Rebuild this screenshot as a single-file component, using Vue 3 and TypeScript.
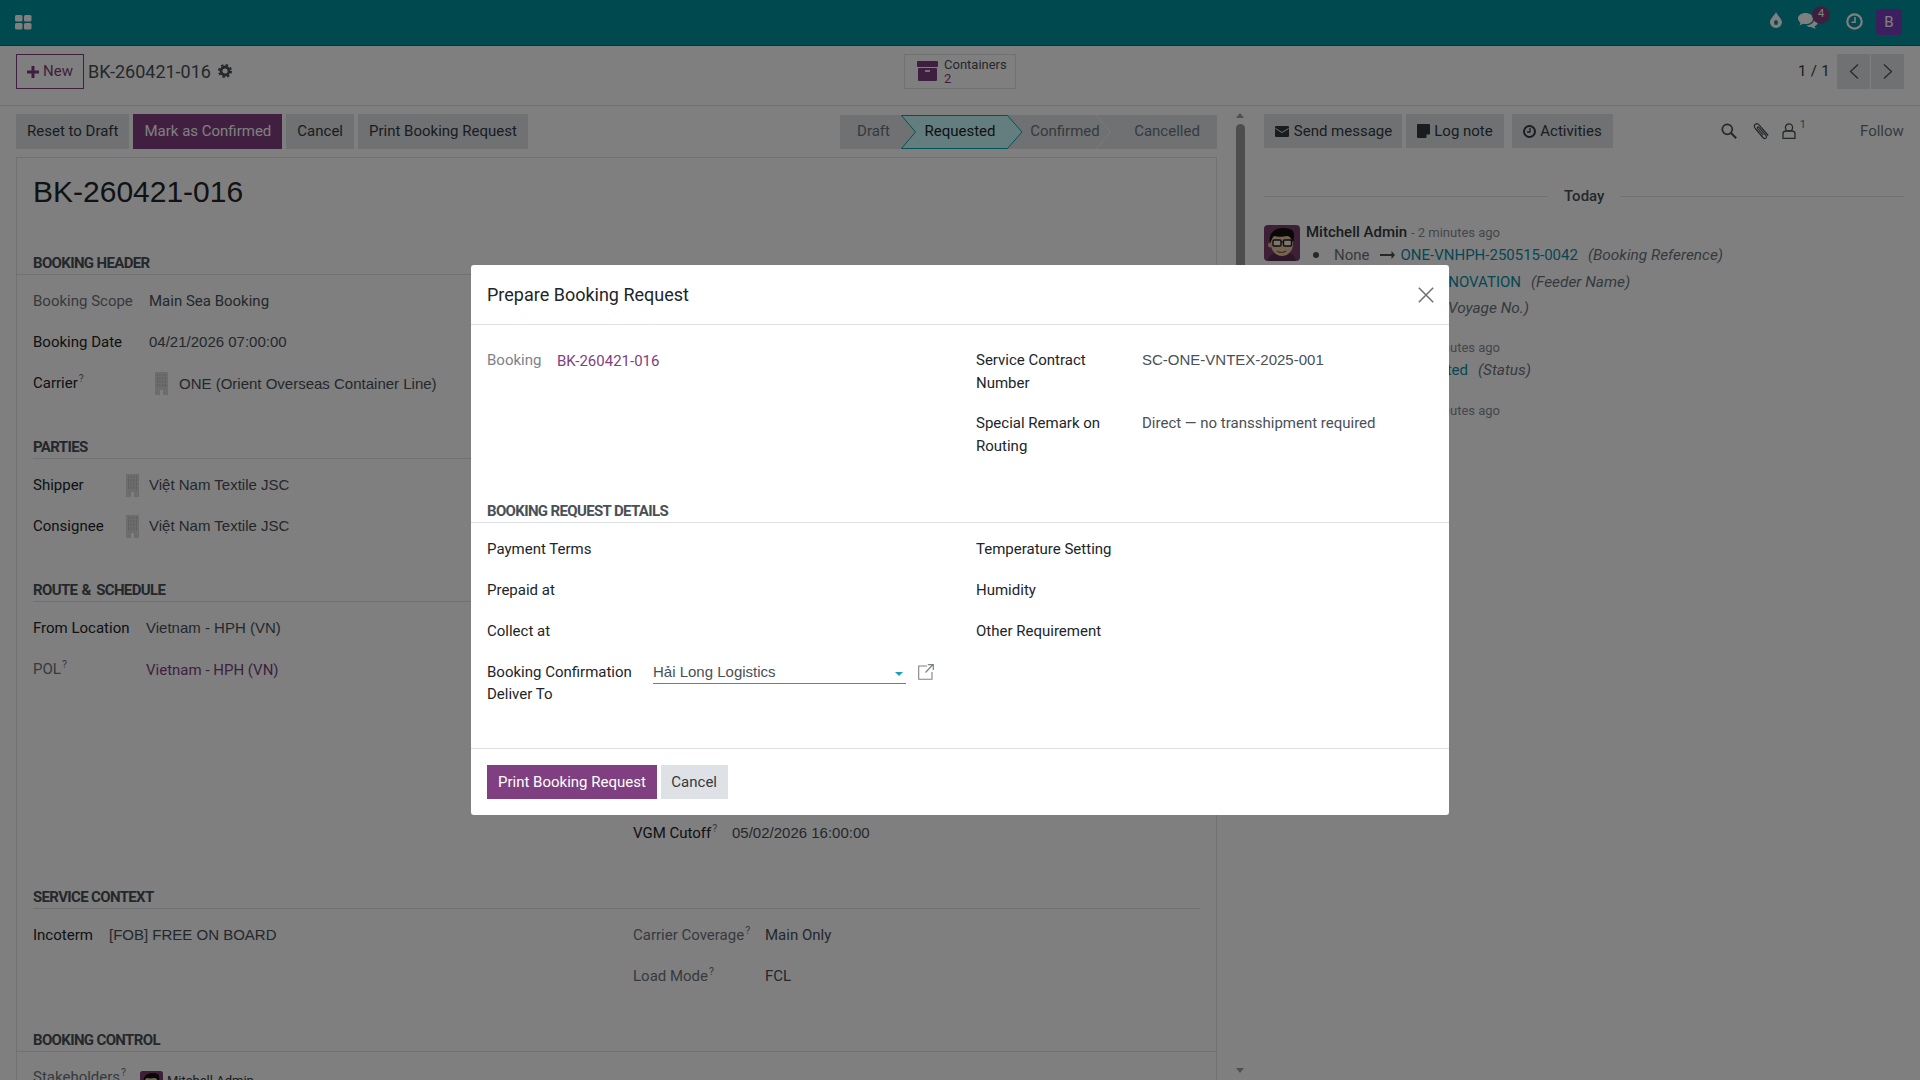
<script setup lang="ts">
const statuses: string[] = ['Draft', 'Requested', 'Confirmed', 'Cancelled']
const detailsLeft: string[] = ['Payment Terms', 'Prepaid at', 'Collect at']
const detailsRight: string[] = ['Temperature Setting', 'Humidity', 'Other Requirement']
</script>

<template>
  <div class="app">
    <svg class="defs" width="0" height="0">
      <defs>
        <symbol id="avatar" viewBox="0 0 36 36">
          <rect width="36" height="36" rx="4" fill="#7a3f6c" />
          <path d="M4 36c1-7 7-9 14-9s13 2 14 9z" fill="#5a2c52" />
          <ellipse cx="18" cy="19" rx="11" ry="12" fill="#ecc9a6" />
          <circle cx="6.500" cy="20" r="2.500" fill="#dcb48f" />
          <path d="M6 18C4 9 10 3 19 3c4 0 9 1 10 3 2 4 1 8 0 11-2-3-3-6-6-6-4 1-10 1-13 0-2 2-3 4-4 7z" fill="#14100f" />
          <rect x="9" y="15" width="8" height="6" rx="1" fill="#f4ece2" stroke="#1d1d1d" stroke-width="1.400" />
          <rect x="19.500" y="15" width="8" height="6" rx="1" fill="#f4ece2" stroke="#1d1d1d" stroke-width="1.400" />
          <path d="M17 17h2.500" stroke="#1d1d1d" stroke-width="1.200" />
          <path d="M13 26c3 2 6 2 9 0" stroke="#8a5a3c" stroke-width="1.200" fill="none" />
        </symbol>
        <symbol id="building" viewBox="0 0 13 23">
          <path d="M0 0h13v23H8v-5H5v5H0z" fill="#dadada" />
          <path d="M2.500 2v13M5 2v13M8 2v13M10.500 2v13" stroke="#bdbdbd" stroke-width="1" />
          <path d="M1 4.500h11M1 8h11M1 11.500h11" stroke="#dadada" stroke-width="1.200" />
        </symbol>
      </defs>
    </svg>

    <header class="topbar">
      <svg class="apps" width="17" height="15" viewBox="0 0 17 15">
        <rect x="0" y="0" width="7.500" height="6.500" rx="1.500" />
        <rect x="9" y="0" width="7.500" height="6.500" rx="1.500" />
        <rect x="0" y="8" width="7.500" height="6.500" rx="1.500" />
        <rect x="9" y="8" width="7.500" height="6.500" rx="1.500" />
      </svg>
      <div class="systray">
        <svg class="tray-drop" width="12" height="16" viewBox="0 0 12 16">
          <path d="M6 0c1 3 6 6.500 6 10.200A6 5.800 0 0 1 0 10.200C0 6.500 5 3 6 0z" fill="#fff" />
          <ellipse cx="6" cy="10.500" rx="2" ry="2.500" fill="#00949f" />
        </svg>
        <div class="tray-chat">
          <svg width="20" height="16" viewBox="0 0 20 16">
            <path d="M7.500 0C3.300 0 0 2.400 0 5.500c0 1.700 1 3.200 2.500 4.200L1.500 12.500l3.400-1.700c.8.200 1.700.3 2.600.3 4.200 0 7.500-2.500 7.500-5.600S11.700 0 7.500 0z" fill="#fff" />
            <path d="M16.500 5.500c.1 3.700-3.600 6.700-8 7 1.200 1 2.800 1.500 4.500 1.500l4.500 2-1-2.800c2-.9 3.500-2.200 3.500-4 0-2-1.500-3.200-3.500-3.700z" fill="#fff" />
          </svg>
          <span class="tray-badge">4</span>
        </div>
        <svg class="tray-clock" width="17" height="17" viewBox="0 0 17 17">
          <circle cx="8.500" cy="8.500" r="7.200" fill="none" stroke="#fff" stroke-width="2.200" />
          <path d="M9 4v5.200H5.500" fill="none" stroke="#fff" stroke-width="1.600" />
        </svg>
        <span class="tray-user">B</span>
      </div>
    </header>

    <div class="control">
      <div class="control-left">
        <button class="btn-new">
          <svg width="12" height="12" viewBox="0 0 12 12"><path d="M4.500 0h3v4.500H12v3H7.500V12h-3V7.500H0v-3h4.500z" fill="#7f3f80" /></svg>
          New
        </button>
        <span class="crumb">BK-260421-016</span>
        <svg class="gear" width="14" height="14" viewBox="0 0 14 14">
          <circle cx="7" cy="7" r="4" fill="none" stroke="#495057" stroke-width="2.800" />
          <circle cx="7" cy="7" r="6" fill="none" stroke="#495057" stroke-width="2" stroke-dasharray="2.400 2.312" />
        </svg>
      </div>
      <div class="stat">
        <svg width="21" height="20" viewBox="0 0 21 20">
          <rect x="0" y="0" width="21" height="6" rx="1" fill="#7f3f80" />
          <rect x="1" y="7" width="19" height="13" rx="1" fill="#7f3f80" />
          <rect x="8" y="9" width="5" height="2" fill="#e8e0e8" />
        </svg>
        <div class="stat-text">
          <span>Containers</span>
          <span class="stat-num">2</span>
        </div>
      </div>
      <div class="control-right">
        <span class="pager">1 / 1</span>
        <button class="page-btn">
          <svg width="10" height="15" viewBox="0 0 10 15"><path d="M9 .5 1.500 7.500 9 14.500" fill="none" stroke="#495057" stroke-width="1.200" /></svg>
        </button>
        <button class="page-btn">
          <svg width="10" height="15" viewBox="0 0 10 15"><path d="M1 .5 8.500 7.500 1 14.500" fill="none" stroke="#495057" stroke-width="1.200" /></svg>
        </button>
      </div>
    </div>

    <div class="main">
      <section class="form-col">
        <div class="actions">
          <div class="action-btns">
            <button class="btn">Reset to Draft</button>
            <button class="btn btn-primary">Mark as Confirmed</button>
            <button class="btn">Cancel</button>
            <button class="btn">Print Booking Request</button>
          </div>
          <div class="statusbar">
            <div v-for="s in statuses" :key="s" class="status" :class="'st-' + s.toLowerCase()">
              <svg v-if="s === 'Requested'" class="st-shape" width="122" height="34" viewBox="0 0 122 34">
                <path d="M.5.500h106L121 17l-14.500 16.500H.5L14.500 17z" fill="#c9fbff" stroke="#00a5b2" />
              </svg>
              <svg v-if="s === 'Confirmed'" class="st-sep" width="15" height="34" viewBox="0 0 15 34">
                <path d="M0 0 14.500 17 0 34" fill="none" stroke="#f4f5f6" />
              </svg>
              <span>{{ s }}</span>
            </div>
          </div>
        </div>

        <div class="sheet">
          <h1 class="title">BK-260421-016</h1>

          <div class="sec sec-wide sec-first">BOOKING HEADER</div>
          <div class="fields">
            <div class="row"><span class="lbl lbl-muted w116">Booking Scope</span><span class="val">Main Sea Booking</span></div>
            <div class="row"><span class="lbl w116">Booking Date</span><span class="val val-a">04/21/2026 07:00:00</span></div>
            <div class="row">
              <span class="lbl w122">Carrier<sup>?</sup></span>
              <svg class="bld bld-wide" width="13" height="23"><use href="#building" /></svg>
              <span class="val val-a val-down">ONE (Orient Overseas Container Line)</span>
            </div>
          </div>

          <div class="sec">PARTIES</div>
          <div class="fields">
            <div class="row">
              <span class="lbl w93">Shipper</span>
              <svg class="bld" width="13" height="23"><use href="#building" /></svg>
              <span class="val val-a">Việt Nam Textile JSC</span>
            </div>
            <div class="row">
              <span class="lbl w93">Consignee</span>
              <svg class="bld" width="13" height="23"><use href="#building" /></svg>
              <span class="val val-a">Việt Nam Textile JSC</span>
            </div>
          </div>

          <div class="sec">ROUTE<span class="amp"> &amp; </span>SCHEDULE</div>
          <div class="two-col">
            <div class="fields">
              <div class="row"><span class="lbl w113">From Location</span><span class="val val-a">Vietnam - HPH (VN)</span></div>
              <div class="row"><span class="lbl lbl-muted w113">POL<sup>?</sup></span><span class="val val-link val-down">Vietnam - HPH (VN)</span></div>
            </div>
            <div class="fields col-right route-right">
              <div class="row"><span class="lbl w99">VGM Cutoff<sup>?</sup></span><span class="val val-a">05/02/2026 16:00:00</span></div>
            </div>
          </div>

          <div class="sec sec-service">SERVICE CONTEXT</div>
          <div class="two-col">
            <div class="fields">
              <div class="row"><span class="lbl w76">Incoterm</span><span class="val val-a">[FOB] FREE ON BOARD</span></div>
            </div>
            <div class="fields col-right">
              <div class="row"><span class="lbl lbl-muted w132">Carrier Coverage<sup>?</sup></span><span class="val">Main Only</span></div>
              <div class="row"><span class="lbl lbl-muted w132">Load Mode<sup>?</sup></span><span class="val">FCL</span></div>
            </div>
          </div>

          <div class="sec sec-wide sec-control">BOOKING CONTROL</div>
          <div class="stake">
            <span class="lbl lbl-muted w108">Stakeholders<sup>?</sup></span>
            <svg class="stake-av" width="23" height="23"><use href="#avatar" /></svg>
            <span class="stake-name">Mitchell Admin</span>
          </div>
        </div>
      </section>

      <div class="scroll">
        <i class="arrow-up"></i>
        <div class="thumb"></div>
        <i class="arrow-down"></i>
      </div>

      <aside class="chatter">
        <div class="chat-top">
          <button class="btn btn-chat w138">
            <svg width="14" height="11" viewBox="0 0 14 11"><rect width="14" height="11" rx="1.200" fill="#343a40" /><path d="M.5 2.500 7 6.500 13.500 2.500" fill="none" stroke="#dee2e6" stroke-width="1" /></svg>
            Send message
          </button>
          <button class="btn btn-chat w98">
            <svg width="13" height="14" viewBox="0 0 13 14"><path d="M1 0h11a1 1 0 0 1 1 1v9l-4 4H1a1 1 0 0 1-1-1V1a1 1 0 0 1 1-1z" fill="#343a40" /><path d="M9.500 14v-3.500H13" fill="#dee2e6" /></svg>
            Log note
          </button>
          <button class="btn btn-chat w100">
            <svg width="13" height="13" viewBox="0 0 13 13"><circle cx="6.500" cy="6.500" r="5.500" fill="none" stroke="#343a40" stroke-width="2" /><path d="M7 3v4H4" fill="none" stroke="#343a40" stroke-width="1.300" /></svg>
            Activities
          </button>
          <div class="chat-tools">
            <svg width="16" height="16" viewBox="0 0 16 16"><circle cx="6.300" cy="6.300" r="5" fill="none" stroke="#495057" stroke-width="1.700" /><path d="m10 10 5.200 5.200" stroke="#495057" stroke-width="2.100" /></svg>
            <svg class="clip" width="17" height="18" viewBox="0 0 17 18"><path d="M15.200 13.500 6.500 3.300C5.300 1.800 3.600 1.300 2.300 2.300 1 3.400 1.100 5 2.300 6.500l7.600 9c.9 1 2 1.300 2.900.6.900-.8.800-1.900-.1-3L6 5.300c-.4-.5-1-.6-1.400-.2-.4.400-.4.900 0 1.400l5.600 6.700" fill="none" stroke="#495057" stroke-width="1.200" /></svg>
            <span class="follower">
              <svg width="14" height="16" viewBox="0 0 14 16"><circle cx="7" cy="4.500" r="3.600" fill="none" stroke="#495057" stroke-width="1.300" /><path d="M1 15.300V11c0-1.800 1.400-3 3-3h6c1.600 0 3 1.200 3 3v4.300z" fill="none" stroke="#495057" stroke-width="1.300" /></svg>
              <span class="follower-n">1</span>
            </span>
            <span class="follow">Follow</span>
          </div>
        </div>

        <div class="today"><span>Today</span></div>

        <div class="msg">
          <svg class="msg-av" width="36" height="36"><use href="#avatar" /></svg>
          <div class="msg-body">
            <div class="msg-head"><b>Mitchell Admin</b> <em>- 2 minutes ago</em></div>
            <div class="msg-row msg-row-first">
              <span class="dot"></span>
              <span class="old">None</span>
              <svg class="long-arrow" width="15" height="8" viewBox="0 0 15 8"><path d="M0 3.100h11.500V0L15 4l-3.500 4V4.900H0z" fill="#495057" /></svg>
              <span class="newval">ONE-VNHPH-250515-0042</span>
              <i class="field-name">(Booking Reference)</i>
            </div>
          </div>
        </div>
        <div class="slot-row slot-feeder"><span class="slot s215"><span class="newval">INNOVATION</span></span><i class="field-name">(Feeder Name)</i></div>
        <div class="slot-row slot-voyage"><span class="slot s223"><i class="field-name">(Voyage No.)</i></span></div>

        <div class="msg msg-next">
          <div class="msg-spacer"></div>
          <div class="msg-body">
            <div class="msg-head"><b>Mitchell Admin</b> <em>- 2 minutes ago</em></div>
          </div>
        </div>
        <div class="slot-row"><span class="slot s162"><span class="newval">Requested</span></span><i class="field-name">(Status)</i></div>

        <div class="msg msg-last">
          <div class="msg-spacer"></div>
          <div class="msg-body">
            <div class="msg-head"><b>Mitchell Admin</b> <em>- 2 minutes ago</em></div>
          </div>
        </div>
      </aside>
    </div>

    <div class="backdrop">
      <div class="modal">
        <div class="modal-head">
          <h4>Prepare Booking Request</h4>
          <svg class="close" width="16" height="16" viewBox="0 0 16 16"><path d="m.8.800 14.400 14.400M15.200.800.800 15.200" stroke="#6f6f6f" stroke-width="1.500" fill="none" /></svg>
        </div>
        <div class="modal-body">
          <div class="m-top">
            <div class="m-col">
              <div class="m-line"><span class="m-lbl-muted w70">Booking</span><span class="m-link">BK-260421-016</span></div>
            </div>
            <div class="m-col m-col-right">
              <div class="m-line"><span class="m-lbl w166">Service Contract Number</span><span class="m-val val-a">SC-ONE-VNTEX-2025-001</span></div>
              <div class="m-line"><span class="m-lbl w166">Special Remark on Routing</span><span class="m-val">Direct — no transshipment required</span></div>
            </div>
          </div>

          <div class="m-sec">BOOKING REQUEST DETAILS</div>

          <div class="m-grid">
            <div class="m-col">
              <div v-for="l in detailsLeft" :key="l" class="m-row"><span class="m-lbl w166">{{ l }}</span></div>
              <div class="m-row">
                <span class="m-lbl w166 deliver">Booking Confirmation Deliver To</span>
                <div class="m-input">
                  <span class="val-a">Hải Long Logistics</span>
                  <i class="caret"></i>
                </div>
                <svg class="ext" width="16" height="16" viewBox="0 0 16 16">
                  <path d="M9 2H.7v13.300H14V8" fill="none" stroke="#7b8289" stroke-width="1.100" />
                  <path d="M7.500 8.500 14.500 1M9.800.7h5.500v5.300" fill="none" stroke="#7b8289" stroke-width="1.200" />
                </svg>
              </div>
            </div>
            <div class="m-col m-col-right">
              <div v-for="l in detailsRight" :key="l" class="m-row"><span class="m-lbl w166">{{ l }}</span></div>
            </div>
          </div>
        </div>
        <div class="modal-foot">
          <button class="btn btn-primary">Print Booking Request</button>
          <button class="btn btn-foot-cancel">Cancel</button>
        </div>
      </div>
    </div>
  </div>
</template>

<style>
html, body { margin: 0; padding: 0; }
</style>

<style scoped>
* { box-sizing: border-box; }
.defs { position: absolute; }
.app {
  position: relative;
  width: 1920px;
  height: 1080px;
  overflow: hidden;
  background: #fff;
  display: flex;
  flex-direction: column;
  font-family: Roboto, "Noto Sans", sans-serif;
  font-size: 15px;
  line-height: 22.500px;
  color: #212529;
}
button { font: inherit; border: 0; cursor: pointer; }

/* top bar */
.topbar {
  height: 46px;
  flex: none;
  background: #00959f;
  border-bottom: 1px solid #00727a;
  display: flex;
  align-items: center;
  justify-content: space-between;
  padding: 0 18px 2px 15px;
}
.apps { margin-top: 1px; }
.apps rect { fill: #fff; }
.systray { display: flex; align-items: center; }
.tray-drop { margin: -3px -1px 0 0; }
.tray-chat { position: relative; display: flex; margin: -2px 0 0 17px; }
.tray-badge {
  position: absolute;
  left: 14px;
  top: -7px;
  width: 18px;
  height: 18px;
  border-radius: 50%;
  background: #7f3f80;
  color: #fff;
  font-size: 11px;
  line-height: 16px;
  text-align: center;
}
.tray-clock { margin: -1px 0 0 28px; }
.tray-user {
  width: 26px;
  height: 26px;
  margin-left: 13px;
  border-radius: 3px;
  background: #7a3fc0;
  color: #fff;
  font-size: 15px;
  line-height: 26px;
  text-align: center;
  margin-top: 1px;
}

/* control panel */
.control {
  height: 60px;
  flex: none;
  display: grid;
  grid-template-columns: 1fr auto 1fr;
  padding: 8px 16px 0;
  border-bottom: 1px solid #dee2e6;
}
.control-left { display: flex; align-items: flex-start; }
.btn-new {
  width: 68px;
  height: 35px;
  background: #fff;
  border: 1px solid #7f3f80;
  color: #7f3f80;
  display: flex;
  align-items: center;
  justify-content: center;
  gap: 4px;
  padding: 0;
  font-size: 15px;
}
.crumb { margin: 5px 0 0 4px; font-size: 18px; line-height: 26px; color: #495057; }
.gear { margin: 10px 0 0 7px; }
.stat {
  width: 112px;
  height: 35px;
  border: 1px solid #dee2e6;
  display: flex;
  align-items: center;
  padding-left: 12px;
  gap: 6px;
}
.stat svg { margin-top: -2px; }
.stat-text { display: flex; flex-direction: column; font-size: 13px; line-height: 14px; color: #495057; }
.stat-num { color: #7f3f80; }
.control-right { display: flex; justify-content: flex-end; }
.pager { margin: 6px 6px 0 0; font-size: 15px; color: #343a40; letter-spacing: .3px; }
.page-btn {
  width: 33px;
  height: 35px;
  background: #dee2e6;
  display: flex;
  align-items: center;
  justify-content: center;
  padding: 0;
  margin-left: 1px;
}

/* main */
.main { flex: 1; min-height: 0; display: flex; }
.form-col { width: 1231px; flex: none; padding: 8px 14px 0 16px; overflow: hidden; }
.actions { display: flex; justify-content: space-between; align-items: flex-end; height: 35px; }
.action-btns { display: flex; gap: 4px; }
.btn {
  height: 35px;
  padding: 0 11px;
  background: #dee2e6;
  color: #343a40;
  font-size: 15px;
}
.btn-primary { background: #803f80; color: #fff; }
.statusbar { display: flex; height: 34px; background: #dee2e6; color: #6c757d; width: 377px; }
.status { position: relative; display: flex; align-items: center; justify-content: center; padding-bottom: 2px; }
.status span { position: relative; }
.st-draft { width: 61px; padding-left: 6px; }
.st-requested { width: 106px; color: #212529; padding-left: 12px; }
.st-confirmed { width: 104px; padding-left: 12px; }
.st-cancelled { width: 106px; padding-left: 6px; }
.st-shape { position: absolute; left: 0; top: 0; z-index: 0; }
.st-sep { position: absolute; right: 0; top: 0; }

/* sheet */
.sheet { margin-top: 8px; width: 1201px; height: 930px; border: 1px solid #dee2e6; padding: 16px 16px 0; }
.title { margin: 0; font-family: "Liberation Sans", Arial, sans-serif; font-weight: 400; font-size: 30px; line-height: 36px; color: #212529; }
.sec {
  height: 22px;
  margin-top: 33px;
  border-bottom: 1px solid #dee2e6;
  font-size: 15px;
  line-height: 21px;
  letter-spacing: -.65px;
  font-weight: 700;
  color: #495057;
}
.amp { letter-spacing: .5px; }
.sec-first { margin-top: 43px; }
.sec-service { margin-top: 33px; }
.sec-control { margin-top: 33px; }
.sec-wide { margin-left: -16px; margin-right: -16px; padding-left: 16px; }
.fields { padding-top: 6px; }
.row { height: 41px; display: flex; align-items: center; }
.lbl { flex: none; color: #212529; }
.lbl-muted { color: #6c757d; }
sup { font-size: 10.500px; line-height: 0; color: #6c757d; vertical-align: 6px; margin-left: 1px; }
.val { color: #495057; }
.val-a { font-family: "Liberation Sans", Arial, sans-serif; }
.val-link { color: #7f3f80; }
.val-down { margin-top: 2px; }
.bld { flex: none; margin-right: 10px; }
.bld-wide { margin-right: 11px; }
.w76 { width: 76px; }
.w93 { width: 93px; }
.w99 { width: 99px; }
.w108 { width: 108px; }
.w113 { width: 113px; }
.w116 { width: 116px; }
.w122 { width: 122px; }
.w132 { width: 132px; }
.two-col { display: grid; grid-template-columns: 600px 1fr; }
.route-right { padding-top: 211px; }
.stake { display: flex; align-items: flex-start; padding-top: 14px; }
.stake-av { margin: 5px 0 0 -1px; flex: none; }
.stake-name { margin: 4px 0 0 4px; font-size: 13px; color: #343a40; }

/* scrollbar */
.scroll { width: 17px; flex: none; position: relative; padding-top: 9px; }
.thumb { width: 9px; height: 620px; margin: 9px 0 0 5px; border-radius: 5px; background: #9a9a9a; }
.arrow-up, .arrow-down { position: absolute; left: 5px; width: 0; height: 0; border-left: 4.500px solid transparent; border-right: 4.500px solid transparent; }
.arrow-up { top: 7px; border-bottom: 5px solid #a0a0a0; }
.arrow-down { top: 962px; border-top: 5px solid #a0a0a0; }

/* chatter */
.chatter { flex: 1; padding: 8px 16px 0; }
.chat-top { display: flex; align-items: center; height: 34px; }
.btn-chat { height: 34px; padding: 0; display: flex; align-items: center; justify-content: center; gap: 4px; margin-right: 4px; }
.w138 { width: 138px; gap: 5px; padding-left: 1px; }
.w98 { width: 98px; margin-right: 8px; }
.w100 { width: 101px; }
.chat-tools { margin-left: auto; display: flex; align-items: center; }
.clip { margin-left: 16px; }
.follower { display: flex; margin-left: 12px; position: relative; }
.follower-n { font-size: 11px; line-height: 12px; margin: -4px 0 0 4px; color: #6c757d; }
.follow { margin-left: 54px; color: #6c757d; width: 44px; }
.today { display: flex; align-items: center; gap: 16px; margin-top: 36px; height: 24px; font-weight: 500; color: #495057; }
.today::before, .today::after { content: ""; flex: 1; height: 1px; background: #dee2e6; }
.today span { width: 40px; }
.msg { display: flex; margin-top: 13px; height: 45px; }
.msg-av { flex: none; margin-top: 4px; }
.msg-spacer { width: 36px; flex: none; }
.msg-body { margin-left: 6px; }
.msg-head { height: 22px; line-height: 22px; white-space: nowrap; }
.msg-head b { font-weight: 500; color: #343a40; }
.msg-head em { font-style: normal; font-size: 13px; color: #868e96; }
.msg-row { display: flex; align-items: center; white-space: nowrap; color: #495057; }
.msg-row-first { margin-top: 1px; height: 22px; padding-left: 7px; }
.dot { width: 6px; height: 6px; border-radius: 50%; background: #495057; margin-right: 15px; }
.old { color: #6c757d; }
.long-arrow { margin: 0 6px 0 10px; }
.newval { color: #0b8ea8; }
.field-name { margin-left: 10px; color: #6c757d; font-size: 15.400px; }
.slot-row { display: flex; height: 22px; white-space: nowrap; padding-left: 42px; }
.slot { text-align: right; display: block; }
.slot .field-name { margin: 0; }
.slot-feeder { margin-top: 5px; }
.slot-voyage { margin-top: 4px; }
.s215 { width: 215px; }
.s223 { width: 223px; }
.s162 { width: 162px; }
.msg-next { margin-top: 17px; height: 23px; }
.msg-last { margin-top: 18px; }

/* modal */
.backdrop {
  position: absolute;
  inset: 0;
  background: rgba(0, 0, 0, .5);
  display: flex;
  align-items: center;
  justify-content: center;
}
.modal { width: 978px; height: 550px; background: #fff; border-radius: 3px; display: flex; flex-direction: column; }
.modal-head {
  height: 60px;
  flex: none;
  padding: 0 16px;
  border-bottom: 1px solid #dee2e6;
  display: flex;
  align-items: center;
  justify-content: space-between;
}
.modal-head h4 { margin: 2px 0 0; font-weight: 400; font-size: 18px; color: #212529; }
.close { margin-right: -1px; }
.modal-body { flex: 1; padding: 24px 16px 0; }
.m-top { display: grid; grid-template-columns: 489px 1fr; height: 108px; }
.m-col-right .m-line + .m-line { margin-top: 18px; }
.m-line { display: flex; }
.m-lbl, .m-lbl-muted { flex: none; }
.m-lbl { color: #212529; }
.m-lbl-muted { color: #7d8288; }
.w70 { width: 70px; }
.w166 { width: 166px; padding-right: 16px; }
.m-link { color: #7f3f80; margin-top: 1px; }
.m-val { color: #495057; }
.m-sec {
  height: 22px;
  margin: 44px -16px 0;
  padding-left: 16px;
  border-bottom: 1px solid #dee2e6;
  font-size: 15px;
  line-height: 21px;
  letter-spacing: -.65px;
  font-weight: 700;
  color: #495057;
}
.m-grid { display: grid; grid-template-columns: 489px 1fr; padding-top: 6px; }
.m-row { display: flex; padding: 9.250px 0; }
.deliver { padding-right: 0; width: 166px; line-height: 22px; }
.m-input {
  width: 253px;
  height: 22.500px;
  border-bottom: 1px solid #17a2b8;
  display: flex;
  justify-content: space-between;
  align-items: center;
  color: #495057;
  padding-right: 3px;
}
.caret { width: 0; height: 0; border-left: 4px solid transparent; border-right: 4px solid transparent; border-top: 4px solid #17a2b8; margin-top: 4px; }
.ext { margin: 3px 0 0 12px; flex: none; }
.modal-foot { height: 67px; flex: none; border-top: 1px solid #dee2e6; padding: 16px 16px 0; display: flex; gap: 4px; }
.modal-foot .btn { height: 34px; }
.modal-foot .btn-foot-cancel { padding: 0 10.500px; }
</style>
